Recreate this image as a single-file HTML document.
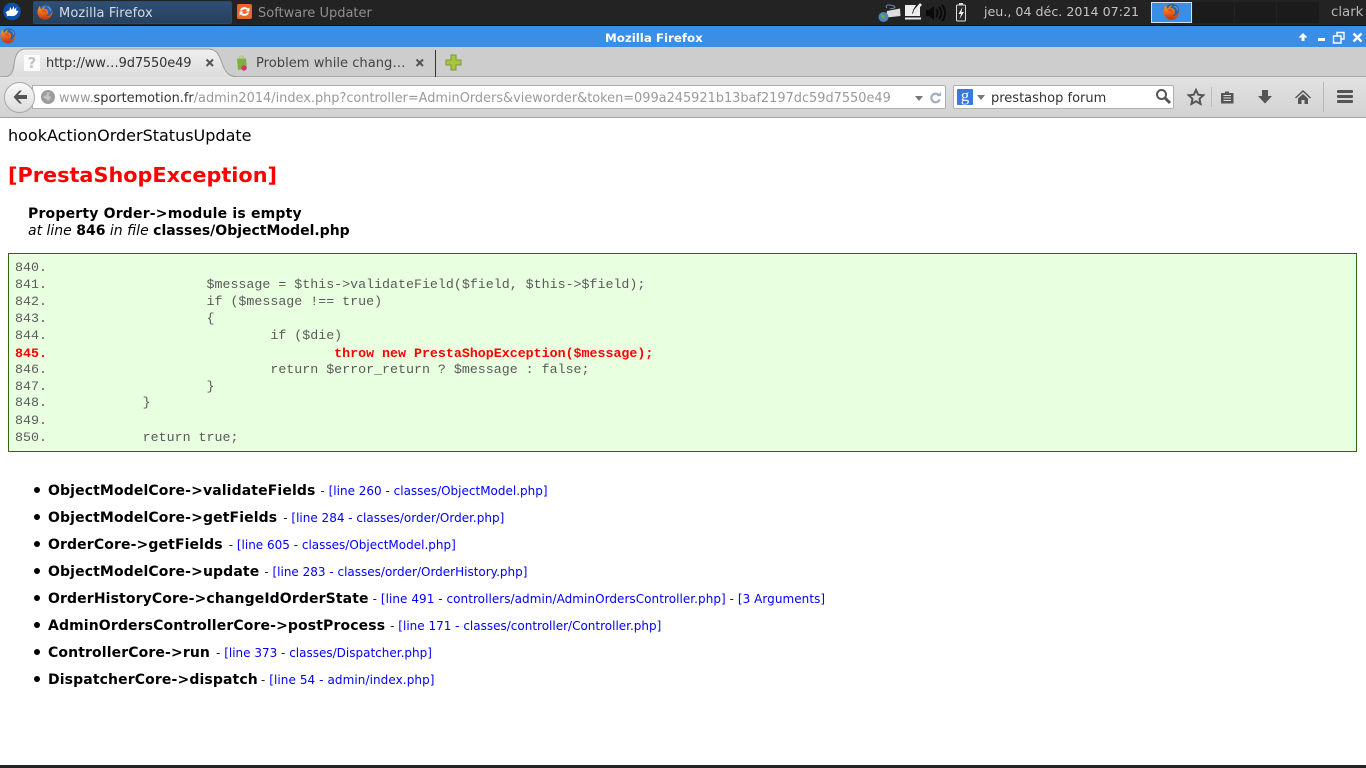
<!DOCTYPE html>
<html><head><meta charset="utf-8"><title>Mozilla Firefox</title>
<style>
html,body{margin:0;padding:0;width:1366px;height:768px;overflow:hidden;background:#fff}
body{position:relative;font-family:"DejaVu Sans","Liberation Sans",sans-serif}
.a{position:absolute;white-space:pre}
svg{position:absolute;overflow:visible}
.code{font-family:"Liberation Mono",monospace;font-size:13.3px;color:#5a5a5a;left:15px;line-height:17px}
.red{color:#f00;font-weight:bold}
.m{font-weight:bold;font-size:14px;letter-spacing:.12px;color:#000;left:48px;line-height:17px}
.m span{font-weight:normal;font-size:12px;letter-spacing:0}
.m i{font-style:normal;color:#00f}
.m b{font-weight:normal;color:#222}
.dot{position:absolute;left:34px;width:6px;height:6px;border-radius:50%;background:#000}
</style></head><body>
<svg width="0" height="0" style="position:absolute"><defs>
<linearGradient id="fg" x1="0" y1="0" x2="0" y2="1"><stop offset="0" stop-color="#f5a623"/><stop offset=".55" stop-color="#e8641c"/><stop offset="1" stop-color="#b8330f"/></linearGradient>
<g id="ff"><circle cx="8.500" cy="7.500" r="6.800" fill="#2f64a8"/><path d="M3 2C3 3.500 3.500 4.800 4.500 5.500 5.500 3.500 7 2.500 9 1.800 7.500 3 7 4 7 5 9 4.800 10.500 5.500 11 7.500 11.500 10 10 11.500 8 11.500 11 13 14 11.500 15.600 7C15.800 12 12 15.800 8 15.800 4 15.800 .4 12.500 .4 8 .4 6 1.400 3.800 3 2Z" fill="url(#fg)"/><path d="M4.500 6C5.500 5.300 6.500 5.300 7 5.500 8 5.500 9 6 9.500 7.500 9.800 9 9 10.500 8 11 8.500 10 8.500 9 8 8.500 6.500 9 5 8 4.500 6Z" fill="#e2581a"/><path d="M10.500 3C12 3.500 13.500 5 13.800 7" fill="none" stroke="#7fa9d8" stroke-width=".8"/></g>
</defs></svg>

<!-- top panel -->
<div class="a" style="left:0;top:0;width:1366px;height:25px;background:#232323"></div>
<div class="a" style="left:0;top:25px;width:1366px;height:1px;background:#111"></div>
<svg style="left:3px;top:3px" width="18" height="18" viewBox="0 0 18 18"><circle cx="9" cy="8.500" r="8.800" fill="#0b50ad"/><path d="M2.500 9.500C4 8 5 7.500 6.500 7.500L7 4 9 7 10.500 3 11.500 6.500 13.500 4 13 7.500 15.500 8C14.500 10 13.500 12.500 10.500 13 8 13.500 6 12 3.500 13.500 4.200 12 4 11 2.500 9.500Z" fill="#fff"/></svg>
<div class="a" style="left:33px;top:1px;width:197px;height:21px;border:1px solid #2b4a6e;border-radius:2px;background:linear-gradient(#2f4f74,#26415f)"></div>
<svg style="left:37px;top:4px" width="16" height="16"><use href="#ff"/></svg>
<div class="a" style="left:59px;top:6px;font-size:13px;letter-spacing:.12px;line-height:16px;color:#d6dbe0">Mozilla Firefox</div>
<div class="a" style="left:237px;top:4px;width:15px;height:15px;background:#e8662c;border-radius:2px"></div>
<svg style="left:237px;top:4px" width="15" height="15" viewBox="0 0 15 15"><path d="M3 6.500C3.500 4 6 3 8 3.200 9.500 3.300 10.500 4 11 4.800L12.500 3.500V7.500H8.500L10 6C9 4.800 6 4.800 5 6.500ZM12 8.500C11.500 11 9 12 7 11.800 5.500 11.700 4.500 11 4 10.200L2.500 11.500V7.500H6.500L5 9C6 10.200 9 10.200 10 8.500Z" fill="#fff"/></svg>
<div class="a" style="left:258px;top:6px;font-size:13px;line-height:16px;color:#8f8f8f">Software Updater</div>

<!-- tray -->
<svg style="left:878px;top:2px" width="24" height="22" viewBox="0 0 24 22"><path d="M9 6C7 4 9 2.500 12 3 15 3.500 17 4 17 5.500 16 7 13 6 12 7" stroke="#6d8aa5" fill="none"/><path d="M9 9L22 6.500 22.500 14 8 15.500Z" fill="#ddd"/><circle cx="5.500" cy="15" r="5" fill="#4a86b8"/><path d="M2.500 12.500C4.500 11.500 6 13.500 7 14.500 6 18 4 17 2.500 12.500Z" fill="#7aa63c"/></svg>
<svg style="left:905px;top:3px" width="17" height="18" viewBox="0 0 17 18"><path d="M0 2H11L8 7 7 11 11 8 15 3V13H0Z" fill="#eee"/><path d="M8 10L9 7 15 0 17 2 10 9Z" fill="#eee"/><rect x="0" y="14.500" width="16" height="2" fill="#eee"/></svg>
<svg style="left:925px;top:3px" width="22" height="20" viewBox="0 0 22 20"><path d="M1 7H4L9 3V17L4 13H1Z" fill="#0a0a0a"/><path d="M11 6C13 8 13 12 11 14M14 4C17 7 17 13 14 16M17 2C21 6 21 14 17 18" stroke="#0a0a0a" stroke-width="2" fill="none"/></svg>
<svg style="left:955px;top:2px" width="12" height="20" viewBox="0 0 12 20"><rect x="1.500" y="3" width="9" height="16" rx="1" fill="#2a2a2a" stroke="#ddd"/><rect x="4" y="1" width="4" height="2" fill="#ddd"/><path d="M7.500 5L3.500 12H6L4.500 17 9 10H6.500Z" fill="#eee"/></svg>
<div class="a" style="left:984px;top:4px;font-size:12.67px;line-height:16px;color:#c4c4c4">jeu., 04 déc. 2014 07:21</div>
<div class="a" style="left:1151px;top:2px;width:39px;height:19px;background:#3a8ee6;border:1px solid #cfe0f2"></div>
<svg style="left:1163px;top:3px" width="17" height="17" viewBox="0 0 16 16"><use href="#ff"/></svg>
<div class="a" style="left:1193px;top:2px;width:41px;height:21px;background:#1b1b1b"></div>
<div class="a" style="left:1235px;top:2px;width:41px;height:21px;background:#1b1b1b"></div>
<div class="a" style="left:1277px;top:2px;width:42px;height:21px;background:#1b1b1b"></div>
<div class="a" style="left:1331px;top:5px;font-size:13.33px;line-height:16px;color:#b8b8b8">clark</div>

<!-- title bar -->
<div class="a" style="left:0;top:26px;width:1366px;height:21px;background:#3a8ee6"></div>
<svg style="left:0;top:27px" width="16" height="17" viewBox="0 0 16 16"><use href="#ff"/></svg>
<div class="a" style="left:605px;top:31px;font-size:11.8px;font-weight:bold;line-height:15px;color:#fff">Mozilla Firefox</div>
<svg style="left:1296px;top:30px" width="70" height="14" viewBox="0 0 70 14"><path d="M7 3L11.500 7.500H8.500V11H5.500V7.500H2.500Z" fill="#fff"/><rect x="22" y="8" width="7" height="3" fill="#fff"/><path d="M37.500 6H45V13H37.500ZM41 5.500V2.500H48V9H45.500" fill="none" stroke="#fff" stroke-width="1.400"/><path d="M57.500 3.500L65.500 11.500M65.500 3.500L57.500 11.500" stroke="#fff" stroke-width="2.400"/></svg>

<!-- tab strip -->
<div class="a" style="left:0;top:47px;width:1366px;height:30px;background:#cdcdcd"></div>
<div class="a" style="left:0;top:76px;width:1366px;height:1px;background:#a9a9a9"></div>
<svg style="left:0;top:47px" width="240" height="31" viewBox="0 0 240 31"><defs><linearGradient id="t" x1="0" y1="0" x2="0" y2="1"><stop offset="0" stop-color="#f0f0f0"/><stop offset="1" stop-color="#dcdcdc"/></linearGradient></defs><path d="M5 30C11 30 13 25 14 18 15 8 18 2 26 2H208C216 2 219 7 222 16 225 25 229 30 236 30Z" fill="url(#t)"/><path d="M5 29.500C11 29.500 13 25 14 18 15 8 18 2 26 2H208C216 2 219 7 222 16 225 25 229 29.500 236 29.500" fill="none" stroke="#9c9c9c"/></svg>
<div class="a" style="left:24px;top:55px;width:16px;height:16px;background:#fafafa"></div>
<div class="a" style="left:24px;top:55px;width:16px;text-align:center;font-size:15px;font-weight:bold;line-height:16px;color:#c4c4c4">?</div>
<div class="a" style="left:46px;top:56px;font-size:13px;letter-spacing:-.15px;line-height:16px;color:#333">http://ww…9d7550e49</div>
<svg style="left:205px;top:58px" width="10" height="10" viewBox="0 0 10 10"><path d="M1.500 1.500L8 8M8 1.500L1.500 8" stroke="#555" stroke-width="2"/></svg>
<svg style="left:235px;top:55px" width="15" height="17" viewBox="0 0 15 17"><path d="M2 3.500H11L12 13.500 3 15Z" fill="#7fb13a"/><path d="M4.500 4V2.500C4.500 .5 8.500 .5 8.500 2.500V4" fill="none" stroke="#9fce5a"/><circle cx="9" cy="13" r="2.700" fill="#d8327a"/></svg>
<div class="a" style="left:256px;top:56px;font-size:13.1px;line-height:16px;color:#444">Problem while chang…</div>
<svg style="left:415px;top:58px" width="10" height="10" viewBox="0 0 10 10"><path d="M1.500 1.500L8 8M8 1.500L1.500 8" stroke="#555" stroke-width="2"/></svg>
<div class="a" style="left:435px;top:50px;width:1px;height:27px;background:#333"></div>
<svg style="left:445px;top:54px" width="17" height="17" viewBox="0 0 17 17"><path d="M6 1H11V6H16V11H11V16H6V11H1V6H6Z" fill="#a5c63d" stroke="#7a9a35"/></svg>

<!-- nav bar -->
<div class="a" style="left:0;top:77px;width:1366px;height:40px;background:linear-gradient(#e2e2e2,#d2d2d2)"></div>
<div class="a" style="left:0;top:117px;width:1366px;height:1px;background:#a4a4a4"></div>
<div class="a" style="left:32px;top:85px;width:912px;height:22px;background:#fff;border:1px solid #b0b0b0;border-radius:0 2px 2px 0"></div>
<div class="a" style="left:4px;top:82px;width:29px;height:29px;border-radius:50%;background:linear-gradient(#fafafa,#dcdcdc);border:1px solid #a8a8a8"></div>
<svg style="left:12px;top:89px" width="16" height="16" viewBox="0 0 16 16"><path d="M7.500 1.500L1.500 8 7.500 14.500H10L6 10H15V6H6L10 1.500Z" fill="#555"/></svg>
<svg style="left:41px;top:90px" width="14" height="14" viewBox="0 0 14 14"><circle cx="7" cy="7" r="7" fill="#9c9c9c"/><path d="M3 2.500C5 2 6 3 6 4 6 6 2.500 5 2.500 7 2.500 9 6 8 6.500 10.500 7 12 8 10 9 9 11 7 9 6 8 6 7 4 9 3 10 2.500" fill="#c4c4c4"/></svg>
<div class="a" style="left:59px;top:91px;font-size:12.9px;line-height:16px;color:#999">www.<span style="color:#333">sportemotion.fr</span>/admin2014/index.php?controller=AdminOrders&amp;vieworder&amp;token=099a245921b13baf2197dc59d7550e49</div>
<svg style="left:914px;top:95px" width="10" height="7"><path d="M1 1H9L5 6Z" fill="#777"/></svg>
<svg style="left:928.500px;top:91px" width="13" height="13" viewBox="0 0 14 14"><path d="M11 5A4.600 4.600 0 1 0 11.500 9" fill="none" stroke="#9fb0bf" stroke-width="2.400"/><path d="M8 5.500H13V1Z" fill="#9fb0bf"/></svg>

<div class="a" style="left:953px;top:85px;width:219px;height:22px;background:#fff;border:1px solid #b0b0b0;border-radius:2px"></div>
<div class="a" style="left:957px;top:89px;width:16px;height:16px;background:#3a78e0;border-radius:1px;color:#fff;font:17px/14px 'Liberation Serif',serif;text-align:center">g</div>
<svg style="left:976px;top:95px" width="10" height="6"><path d="M1 0H9L5 5Z" fill="#777"/></svg>
<div class="a" style="left:991px;top:91px;font-size:13px;line-height:16px;color:#333">prestashop forum</div>
<svg style="left:1155px;top:88px" width="17" height="17" viewBox="0 0 17 17"><circle cx="6.500" cy="6.500" r="4.500" fill="none" stroke="#555" stroke-width="2"/><path d="M10 10L15 15" stroke="#555" stroke-width="3"/></svg>

<svg style="left:1187px;top:88px" width="18" height="18" viewBox="0 0 18 18"><path d="M9 2L11.200 6.700 16.300 7.300 12.500 10.800 13.500 15.900 9 13.300 4.500 15.900 5.500 10.800 1.700 7.300 6.800 6.700Z" fill="none" stroke="#555" stroke-width="2"/></svg>
<div class="a" style="left:1211px;top:87px;width:1px;height:20px;background:#bcbcbc"></div>
<svg style="left:1220px;top:89px" width="15" height="16" viewBox="0 0 15 16"><path d="M1 4H5V2.500H9V4H13.500V14.500H1Z" fill="#555"/><path d="M3.500 6.500H11M3.500 9H11M3.500 11.500H11" stroke="#ddd"/></svg>
<svg style="left:1257px;top:89px" width="16" height="16" viewBox="0 0 16 16"><path d="M5 1H11V7H15L8 14.500 1 7H5Z" fill="#555"/></svg>
<svg style="left:1295px;top:89px" width="16" height="16" viewBox="0 0 16 16"><path d="M8 1L0 8.500 1 9.500 8 3 15 9.500 16 8.500Z" fill="#555"/><path d="M3 9.500L8 5 13 9.500V15H9.500V11H6.500V15H3Z" fill="#555"/></svg>
<div class="a" style="left:1323px;top:82px;width:1px;height:30px;background:#b8b8b8"></div>
<svg style="left:1337px;top:90px" width="16" height="14" viewBox="0 0 16 14"><rect y="0" width="16" height="3" rx="1" fill="#555"/><rect y="5" width="16" height="3" rx="1" fill="#555"/><rect y="10" width="16" height="3" rx="1" fill="#555"/></svg>

<!-- page -->
<div class="a" style="left:8px;top:126px;font-size:16px;line-height:19px;color:#000">hookActionOrderStatusUpdate</div>
<div class="a" style="left:8px;top:161.500px;font-size:20.8px;font-weight:bold;line-height:26px;color:#f00">[PrestaShopException]</div>
<div class="a" style="left:28px;top:206px;font-size:14px;letter-spacing:.19px;font-weight:bold;line-height:17px;color:#000">Property Order-&gt;module is empty</div>
<div class="a" style="left:28px;top:223px;font-size:14px;line-height:17px;color:#000"><i>at line </i><b>846</b><i> in file </i><b>classes/ObjectModel.php</b></div>

<div class="a" style="left:8px;top:253px;width:1347px;height:197px;background:#e8ffe0;border:1px solid #2f6b0c"></div>
<div class="a code" style="top:259px">840.</div>
<div class="a code" style="top:276px">841.                    $message = $this-&gt;validateField($field, $this-&gt;$field);</div>
<div class="a code" style="top:293px">842.                    if ($message !== true)</div>
<div class="a code" style="top:310px">843.                    {</div>
<div class="a code" style="top:327px">844.                            if ($die)</div>
<div class="a code red" style="top:345px">845.                                    throw new PrestaShopException($message);</div>
<div class="a code" style="top:361px">846.                            return $error_return ? $message : false;</div>
<div class="a code" style="top:378px">847.                    }</div>
<div class="a code" style="top:394px">848.            }</div>
<div class="a code" style="top:412px">849.</div>
<div class="a code" style="top:429px">850.            return true;</div>

<div class="dot" style="top:487px"></div>
<div class="a m" style="top:483px">ObjectModelCore-&gt;validateFields <span><b>- </b><i>[line 260 - classes/ObjectModel.php]</i></span></div>
<div class="dot" style="top:514px"></div>
<div class="a m" style="top:510px">ObjectModelCore-&gt;getFields <span style="margin-left:1px"><b>- </b><i>[line 284 - classes/order/Order.php]</i></span></div>
<div class="dot" style="top:541px"></div>
<div class="a m" style="top:537px">OrderCore-&gt;getFields <span style="margin-left:1px"><b>- </b><i>[line 605 - classes/ObjectModel.php]</i></span></div>
<div class="dot" style="top:568px"></div>
<div class="a m" style="top:564px">ObjectModelCore-&gt;update <span><b>- </b><i>[line 283 - classes/order/OrderHistory.php]</i></span></div>
<div class="dot" style="top:595px"></div>
<div class="a m" style="top:591px">OrderHistoryCore-&gt;changeIdOrderState <span style="margin-left:-1px;letter-spacing:.05px"><b>- </b><i>[line 491 - controllers/admin/AdminOrdersController.php]</i><b> - </b><i>[3 Arguments]</i></span></div>
<div class="dot" style="top:622px"></div>
<div class="a m" style="top:618px">AdminOrdersControllerCore-&gt;postProcess <span><b>- </b><i>[line 171 - classes/controller/Controller.php]</i></span></div>
<div class="dot" style="top:649px"></div>
<div class="a m" style="top:645px">ControllerCore-&gt;run <span style="margin-left:1px"><b>- </b><i>[line 373 - classes/Dispatcher.php]</i></span></div>
<div class="dot" style="top:676px"></div>
<div class="a m" style="top:672px">DispatcherCore-&gt;dispatch <span style="margin-left:-2px;letter-spacing:.08px"><b>- </b><i>[line 54 - admin/index.php]</i></span></div>

<div class="a" style="left:0;top:765px;width:1366px;height:3px;background:#232323"></div>
</body></html>
